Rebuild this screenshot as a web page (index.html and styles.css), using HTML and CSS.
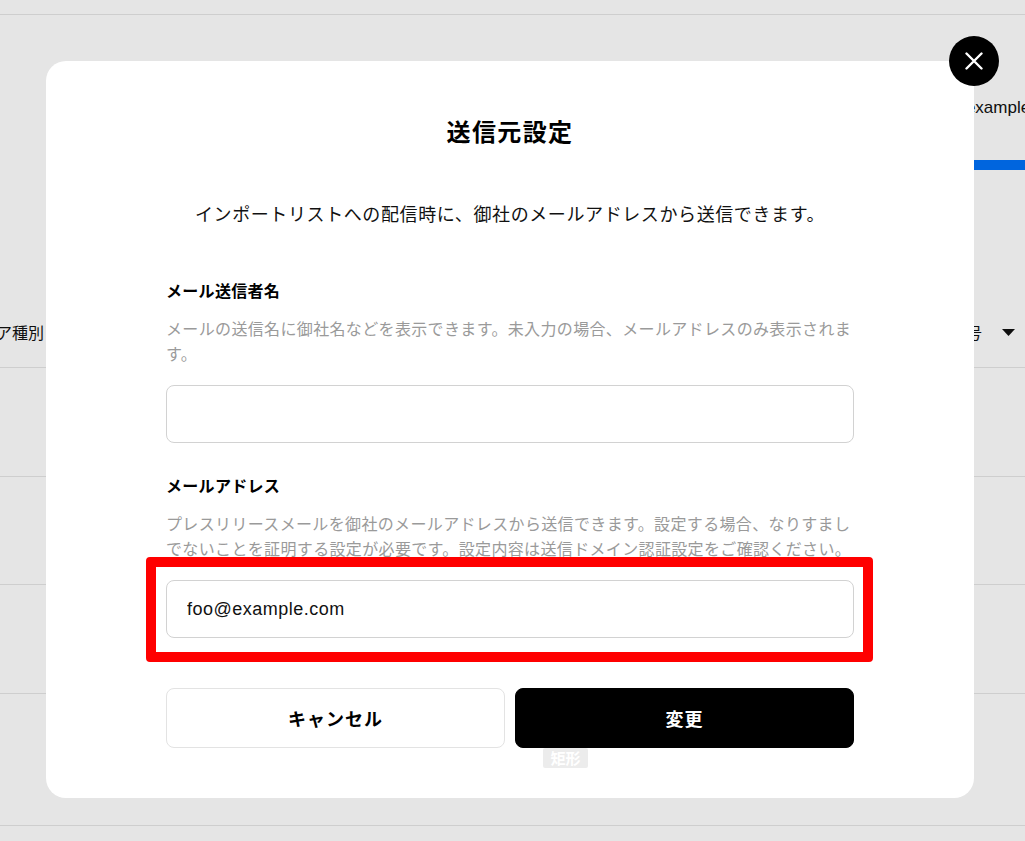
FILE: index.html
```html
<!DOCTYPE html>
<html lang="ja">
<head>
<meta charset="utf-8">
<title>送信元設定</title>
<link rel="stylesheet" href="styles.css">
</head>
<body>
<div class="page">
  <div class="topbar"></div>
  <div class="tabs">
    <div class="tab">foo@example.com</div>
  </div>
  <div class="thead">
    <div class="cell-left"><span>メディア種別</span></div>
    <div class="cell-right"><span>電話番号</span>
      <svg class="caret" width="13" height="7" viewBox="0 0 13 7"><path d="M0 0H13L6.5 7Z" fill="#111"/></svg>
    </div>
  </div>
  <div class="row r1"></div>
  <div class="row r2"></div>
  <div class="row r3"></div>
  <div class="row r4"></div>
</div>

<div class="overlay"></div>

<div class="modal">
  <button class="close" aria-label="閉じる">
    <svg width="18" height="18" viewBox="0 0 18 18"><path d="M1.5 1.5L16.5 16.5M16.5 1.5L1.5 16.5" stroke="#fff" stroke-width="2.4" stroke-linecap="round"/></svg>
  </button>
  <h1 class="title">送信元設定</h1>
  <p class="desc">インポートリストへの配信時に、御社のメールアドレスから送信できます。</p>

  <div class="field first">
    <div class="label">メール送信者名</div>
    <p class="help">メールの送信名に御社名などを表示できます。未入力の場合、メールアドレスのみ表示されます。</p>
    <input class="input" type="text" value="">
  </div>

  <div class="field">
    <div class="label">メールアドレス</div>
    <p class="help">プレスリリースメールを御社のメールアドレスから送信できます。設定する場合、なりすまし<br>でないことを証明する設定が必要です。設定内容は送信ドメイン認証設定をご確認ください。</p>
    <input class="input" type="text" value="foo@example.com">
  </div>

  <div class="actions">
    <button class="btn btn-cancel">キャンセル</button>
    <button class="btn btn-primary">変更</button>
  </div>

  <div class="highlight"></div>
  <div class="badge">矩形</div>
</div>
</body>
</html>
```

FILE: styles.css
```css
html, body {
  margin: 0;
  padding: 0;
}
body {
  width: 1025px;
  height: 841px;
  overflow: hidden;
  background: #ffffff;
  font-family: "Noto Sans CJK JP", "Noto Sans", sans-serif;
  color: #111;
  position: relative;
}

/* background page */
.page {
  display: flex;
  flex-direction: column;
  width: 1025px;
}
.topbar {
  height: 14px;
  border-bottom: 1px solid #e6e6e6;
}
.tabs {
  height: 155px;
  display: flex;
  align-items: flex-end;
  padding-left: 925px;
  overflow: hidden;
}
.tab {
  flex: none;
  font-family: "Liberation Sans", Arial, sans-serif;
  font-size: 17px;
  line-height: 24px;
  padding: 0 16px 40px 0;
  border-bottom: 10px solid #0071f8;
  white-space: nowrap;
  color: #111;
}
.thead {
  height: 198px;
  box-sizing: border-box;
  border-bottom: 1px solid #e6e6e6;
  display: flex;
  justify-content: space-between;
  align-items: flex-end;
  padding-bottom: 23px;
  font-size: 16px;
  line-height: 24px;
}
.cell-left {
  width: 44px;
  display: flex;
  justify-content: flex-end;
  white-space: nowrap;
}
.cell-right {
  width: 61px;
  display: flex;
  justify-content: flex-end;
  align-items: center;
  white-space: nowrap;
  padding-right: 10px;
  box-sizing: border-box;
}
.caret {
  flex: none;
  margin-left: 20px;
}
.row {
  border-bottom: 1px solid #e6e6e6;
}
.r1 { height: 108px; }
.r2 { height: 107px; }
.r3 { height: 108px; }
.r4 { height: 131px; }

.overlay {
  position: fixed;
  inset: 0;
  background: rgba(0, 0, 0, 0.1);
}

/* modal */
.modal {
  position: absolute;
  left: 46px;
  top: 61px;
  width: 928px;
  box-sizing: border-box;
  padding: 52px 120px 50px;
  background: #ffffff;
  border-radius: 20px;
  display: flex;
  flex-direction: column;
}
.close {
  position: absolute;
  top: -25px;
  right: -25px;
  width: 50px;
  height: 50px;
  border-radius: 50%;
  background: #000;
  border: none;
  padding: 0;
  display: flex;
  align-items: center;
  justify-content: center;
}
.title {
  margin: 0;
  font-size: 24px;
  line-height: 36px;
  font-weight: 700;
  letter-spacing: 1.4px;
  text-align: center;
  color: #000;
}
.desc {
  margin: 50px 0 0;
  font-size: 18px;
  line-height: 28px;
  letter-spacing: 0.6px;
  text-align: center;
  color: #111;
}
.field {
  display: flex;
  flex-direction: column;
  margin-top: 30px;
}
.field.first {
  margin-top: 51px;
}
.label {
  font-size: 16px;
  line-height: 24px;
  font-weight: 700;
  letter-spacing: 0.3px;
  color: #000;
}
.help {
  margin: 14px 0 0;
  font-size: 16px;
  line-height: 25px;
  letter-spacing: 0.35px;
  color: #9a9a9a;
}
.input {
  margin-top: 19px;
  height: 58px;
  box-sizing: border-box;
  border: 1px solid #d2d2d2;
  border-radius: 8px;
  padding: 0 20px;
  font-family: "Liberation Sans", Arial, sans-serif;
  font-size: 18px;
  letter-spacing: 0.5px;
  color: #111;
  background: #fff;
  outline: none;
}
.actions {
  margin-top: 50px;
  display: flex;
  gap: 10px;
}
.btn {
  flex: 1;
  height: 60px;
  border-radius: 8px;
  font-family: "Noto Sans CJK JP", sans-serif;
  font-size: 18px;
  font-weight: 700;
  letter-spacing: 1px;
  cursor: pointer;
}
.btn-cancel {
  background: #fff;
  border: 1px solid #e3e3e3;
  color: #000;
}
.btn-primary {
  background: #000;
  border: 1px solid #000;
  color: #fff;
}

/* annotation overlays */
.highlight {
  position: absolute;
  left: 100px;
  top: 496px;
  width: 727px;
  height: 105px;
  box-sizing: border-box;
  border: 10px solid #ff0000;
  border-radius: 4px;
  pointer-events: none;
}
.badge {
  position: absolute;
  left: 497px;
  top: 687px;
  width: 45px;
  height: 20px;
  background: #ececec;
  border-radius: 2px;
  color: #fff;
  font-size: 15px;
  font-weight: 700;
  line-height: 20px;
  text-align: center;
}
```
